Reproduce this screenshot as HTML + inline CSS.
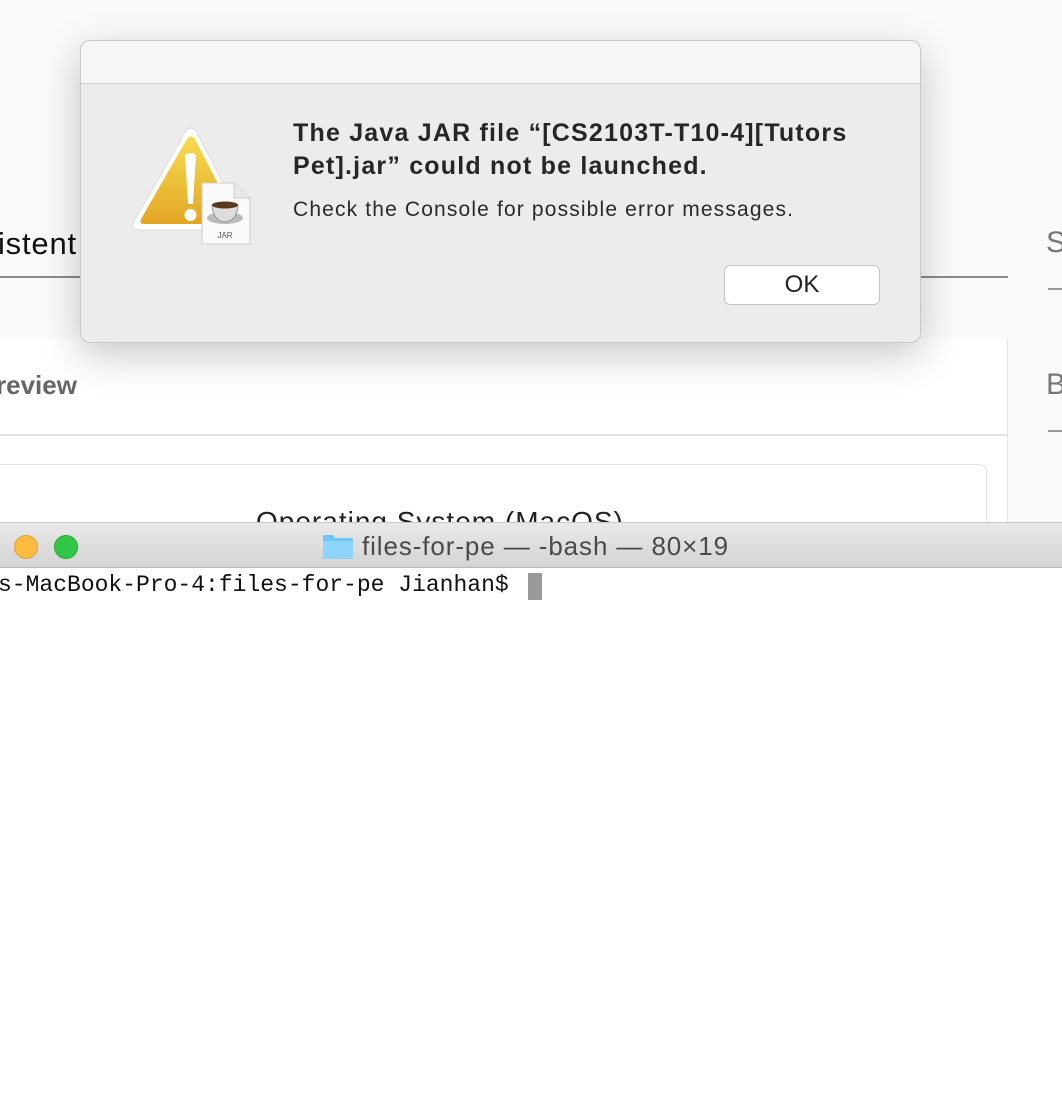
<!DOCTYPE html>
<html><head><meta charset="utf-8"><style>
*{margin:0;padding:0;box-sizing:border-box}
body{width:1062px;height:1102px;overflow:hidden;background:#fff;position:relative;font-family:"Liberation Sans",sans-serif}
.a{position:absolute}
</style></head><body>
<div class="a" style="left:0;top:0;width:1062px;height:522px;background:#fafafa"></div>
<div class="a" style="left:-2px;top:226px;font-size:31px;color:#111;letter-spacing:.8px">istent</div>
<div class="a" style="left:0;top:276px;width:1008px;height:2px;background:#8a8a8a"></div>
<div class="a" style="left:1046px;top:226px;font-size:30px;color:#777">S</div>
<div class="a" style="left:1048px;top:288px;width:14px;height:2px;background:#999"></div>
<div class="a" style="left:1046px;top:368px;font-size:30px;color:#777">B</div>
<div class="a" style="left:1048px;top:430px;width:14px;height:2px;background:#999"></div>
<div class="a" style="left:0;top:338px;width:1008px;height:190px;background:#fff;border-right:1px solid #e6e6e6"></div>
<div class="a" style="left:-4px;top:370px;font-size:26px;color:#666;font-weight:bold">review</div>
<div class="a" style="left:0;top:434px;width:1008px;height:2px;background:#e2e2e2"></div>
<div class="a" style="left:-10px;top:464px;width:997px;height:80px;border:1px solid #e3e3e3;border-radius:8px;background:#fff"></div>
<div class="a" style="left:256px;top:506px;font-size:28px;color:#222;letter-spacing:1px">Operating System (MacOS)</div>

<div class="a" style="left:80px;top:40px;width:841px;height:303px;border-radius:10px;background:#ececec;border:1px solid #c8c8c8;box-shadow:0 12px 40px rgba(0,0,0,.22);overflow:hidden">
 <div style="height:43px;background:#f6f6f6;border-bottom:1px solid #d2d2d2"></div>
 <svg class="a" style="left:50px;top:84px" width="124" height="122" viewBox="0 0 124 122">
  <defs><linearGradient id="g" x1="0" y1="0" x2="0" y2="1"><stop offset="0" stop-color="#f7dc50"/><stop offset="1" stop-color="#e2a625"/></linearGradient></defs>
  <path d="M55 6 Q60 0 65 6 L112 96 Q115 104 106 105 L8 105 Q-1 104 3 96 Z" fill="#fff" stroke="#ddd"/>
  <path d="M56 14 Q60 9 64 14 L105 94 Q107 99 102 99 L13 99 Q8 99 10 94 Z" fill="url(#g)"/>
  <path d="M54 30 Q60 26 65 30 L62 79 L57 79 Z" fill="#fff"/>
  <circle cx="59.5" cy="90" r="6" fill="#fff"/>
  <path d="M71 58 L103 58 L119 73 L119 119 L71 119 Z" fill="#fafafa" stroke="#ccc"/>
  <path d="M103 58 L103 73 L119 73" fill="#e8e8e8" stroke="#ccc"/>
  <ellipse cx="94" cy="93" rx="18" ry="6" fill="#bbb"/>
  <path d="M81 80 L107 80 Q106 96 94 97 Q82 96 81 80 Z" fill="#ddd" stroke="#999"/>
  <ellipse cx="94" cy="80" rx="13" ry="3.5" fill="#5a3a1e"/>
  <text x="94" y="113" font-size="8" text-anchor="middle" fill="#555" font-family="Liberation Sans">JAR</text>
 </svg>
 <div class="a" style="left:212px;top:76px;width:600px;font-size:25px;font-weight:bold;color:#262626;line-height:33px;letter-spacing:1.2px">The Java JAR file “[CS2103T-T10-4][Tutors Pet].jar” could not be launched.</div>
 <div class="a" style="left:212px;top:157px;font-size:21px;color:#2a2a2a;letter-spacing:1.15px">Check the Console for possible error messages.</div>
 <div class="a" style="left:643px;top:224px;width:156px;height:40px;background:#fff;border:1px solid #c4c4c4;border-radius:6px;font-size:24px;color:#222;text-align:center;line-height:38px">OK</div>
</div>

<div class="a" style="left:0;top:522px;width:1062px;height:46px;background:linear-gradient(#e9e9e9,#d4d4d4);border-top:1px solid #c8c8c8;border-bottom:1px solid #b8b8b8"></div>
<div class="a" style="left:14px;top:535px;width:24px;height:24px;border-radius:50%;background:#fdbc40;border:1px solid #dea030"></div>
<div class="a" style="left:54px;top:535px;width:24px;height:24px;border-radius:50%;background:#33c748;border:1px solid #27aa35"></div>
<svg class="a" style="left:322px;top:534px" width="32" height="26"><path d="M1 3 Q1 1 3 1 L11 1 L13 4 L30 4 Q31 4 31 6 L31 24 Q31 25 30 25 L2 25 Q1 25 1 24 Z" fill="#6ec6f5"/><rect x="1" y="7" width="30" height="18" fill="#8fd4fa"/></svg>
<div class="a" style="left:362px;top:531px;font-size:26px;color:#4a4a4a;letter-spacing:.9px">files-for-pe — -bash — 80×19</div>
<div class="a" style="left:-2px;top:572px;font-family:'Liberation Mono',monospace;font-size:23px;color:#111">s-MacBook-Pro-4:files-for-pe Jianhan$</div>
<div class="a" style="left:528px;top:573px;width:14px;height:27px;background:#999"></div>
</body></html>
